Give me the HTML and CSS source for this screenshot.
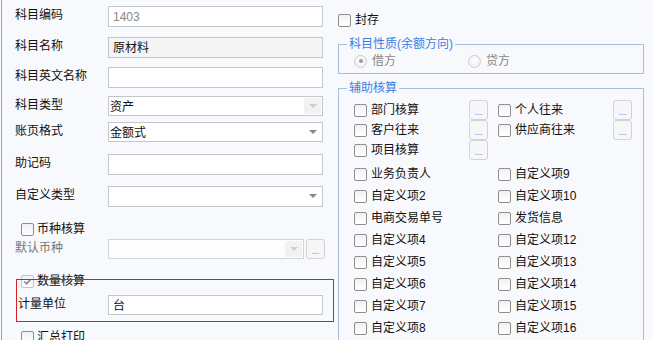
FILE: index.html
```html
<!DOCTYPE html>
<html lang="zh-CN">
<head>
  <meta charset="UTF-8" />
  <meta name="viewport" content="width=device-width, initial-scale=1">
  <title>科目设置</title>
  <link rel="stylesheet" href="styles.css">
</head>
<body>

  <div class="page">
    <div class="left">
      <div class="row r1"><label>科目编码</label><div class="field ro">1403</div></div>
      <div class="row r2"><label>科目名称</label><div class="field grey">原材料</div></div>
      <div class="row r3"><label>科目英文名称</label><div class="field"></div></div>
      <div class="row r4"><label>科目类型</label><div class="field select off">资产<span class="arrow"></span></div></div>
      <div class="row r5"><label>账页格式</label><div class="field select">金额式<span class="arrow"></span></div></div>
      <div class="row r6"><label>助记码</label><div class="field"></div></div>
      <div class="row r7"><label>自定义类型</label><div class="field select"><span class="arrow"></span></div></div>

      <div class="check currency"><span class="cb"></span>币种核算</div>
      <div class="row sub dim">
        <label>默认币种</label>
        <div class="field select off short"><span class="arrow"></span></div>
        <span class="dots">...</span>
      </div>

      <div class="check qty"><span class="cb on"><svg viewBox="0 0 12 12"><polyline points="2.5,6 5,8.5 9.5,3.5" /></svg></span>数量核算</div>
      <div class="row unit"><label>计量单位</label><div class="field">台</div></div>
      <div class="check print"><span class="cb"></span>汇总打印</div>

      <div class="mark"></div>
    </div>

    <div class="right">
      <div class="check seal"><span class="cb"></span>封存</div>

      <fieldset class="group nature">
        <legend>科目性质(余额方向)</legend>
        <div class="radios">
          <span class="radio-item"><span class="rb on"></span>借方</span>
          <span class="radio-item"><span class="rb"></span>贷方</span>
        </div>
      </fieldset>

      <fieldset class="group aux">
        <legend>辅助核算</legend>
        <div class="aux-grid top">
          <div class="cell"><span class="check"><span class="cb"></span>部门核算</span><span class="dots">...</span></div>
          <div class="cell"><span class="check"><span class="cb"></span>个人往来</span><span class="dots">...</span></div>
          <div class="cell"><span class="check"><span class="cb"></span>客户往来</span><span class="dots">...</span></div>
          <div class="cell"><span class="check"><span class="cb"></span>供应商往来</span><span class="dots">...</span></div>
          <div class="cell"><span class="check"><span class="cb"></span>项目核算</span><span class="dots">...</span></div>
          <div class="cell"></div>
        </div>
        <div class="aux-grid items">
          <span class="check"><span class="cb"></span>业务负责人</span>
          <span class="check"><span class="cb"></span>自定义项9</span>
          <span class="check"><span class="cb"></span>自定义项2</span>
          <span class="check"><span class="cb"></span>自定义项10</span>
          <span class="check"><span class="cb"></span>电商交易单号</span>
          <span class="check"><span class="cb"></span>发货信息</span>
          <span class="check"><span class="cb"></span>自定义项4</span>
          <span class="check"><span class="cb"></span>自定义项12</span>
          <span class="check"><span class="cb"></span>自定义项5</span>
          <span class="check"><span class="cb"></span>自定义项13</span>
          <span class="check"><span class="cb"></span>自定义项6</span>
          <span class="check"><span class="cb"></span>自定义项14</span>
          <span class="check"><span class="cb"></span>自定义项7</span>
          <span class="check"><span class="cb"></span>自定义项15</span>
          <span class="check"><span class="cb"></span>自定义项8</span>
          <span class="check"><span class="cb"></span>自定义项16</span>
        </div>
      </fieldset>
    </div>
  </div>

</body>
</html>
```

FILE: styles.css
```css
html, body {
  margin: 0;
  height: 100%;
  overflow: hidden;
}

body {
  background: #f8f9fd;
  font-family: "Liberation Sans", "Noto Sans CJK SC", sans-serif;
  font-size: 12px;
  line-height: 16px;
  color: #111;
}

.page {
  display: flex;
  height: 100%;
  margin-left: 1px;
  border-left: 1px solid #7fa5da;
}

/* left column */
.left {
  position: relative;
  width: 323px;
  padding: 6px 0 0 13px;
  display: flex;
  flex-direction: column;
}

.left > * { flex-shrink: 0; }

.row {
  display: flex;
  align-items: center;
  height: 21px;
  margin-bottom: 9px;
}

.r1 { margin-bottom: 10px; }
.r3 { margin-bottom: 8px; }
.r4 { height: 20px; margin-bottom: 6px; }
.r5 { height: 20px; margin-bottom: 12px; }
.r6 { margin-bottom: 11px; }
.r4 .field, .r5 .field { height: 20px; }

.row label {
  width: 93px;
  padding-bottom: 3px;
}

.field {
  position: relative;
  box-sizing: border-box;
  width: 215px;
  height: 21px;
  border: 1px solid #c3c7cc;
  background: #fff;
  padding: 1px 4px 0 4px;
  line-height: 18px;
}

.field.ro { color: #888; }
.field.grey { background: #f5f5f6; }

.select { padding-left: 1px; }

.arrow {
  position: absolute;
  right: 1px;
  top: 1px;
  width: 17px;
  height: 16px;
}

.arrow::after {
  content: "";
  position: absolute;
  left: 5px;
  top: 6px;
  border-left: 4px solid transparent;
  border-right: 4px solid transparent;
  border-top: 4px solid #888;
}

.off .arrow { background: #f2f2f2; }
.off .arrow::after { border-top-color: #cfcfcf; }

.check {
  display: flex;
  align-items: center;
  gap: 4px;
  height: 18px;
}

.cb {
  box-sizing: border-box;
  width: 13px;
  height: 13px;
  border: 1px solid #8e8e8e;
  border-radius: 2px;
  background: linear-gradient(#f1f1f1, #fff);
  flex: none;
}

.cb svg {
  display: block;
  width: 11px;
  height: 11px;
}

.cb svg polyline {
  fill: none;
  stroke: #8a8a8a;
  stroke-width: 1.8;
}

.cb.on { border-color: #bdbdbd; }

.currency { margin: 4px 0 0 6px; gap: 3px; }

.sub { height: 20px; margin: 1px 0 0; }
.dim label { color: #777; }
.short { width: 196px; height: 20px; background: #fdfdfd; border-color: #d2d5d8; }

.dots {
  box-sizing: border-box;
  width: 19px;
  height: 20px;
  margin-left: 2px;
  border: 1px solid #d3d3d3;
  border-radius: 3px;
  background: #f7f7f7;
  color: #4f7fd0;
  font-family: "DejaVu Sans", sans-serif;
  font-size: 8px;
  line-height: 23px;
  text-align: center;
  letter-spacing: 0;
}

.qty { margin: 13px 0 0 6px; gap: 3px; }
.qty .cb { border-color: #c5c5c5; }

.unit { margin: 5px 0 0; height: 20px; }
.unit label { padding-left: 3px; width: 91px; }
.unit .field { width: 215px; height: 20px; margin-left: -1px; }

.print { margin: 13px 0 0 6px; gap: 3px; }

.mark {
  position: absolute;
  left: 14px;
  top: 279px;
  width: 316px;
  height: 41px;
  border: 1px solid #d42020;
}

/* right column */
.right {
  width: 306px;
  padding: 11px 0 0 0;
}

.seal { margin-bottom: 7px; }

.group {
  margin: 0;
  padding: 0 8px;
  border: 1px solid #aabfd8;
  min-width: 0;
}

.group legend {
  padding: 0 2px;
  color: #3c7fe4;
  line-height: 16px;
}

.nature { padding-bottom: 3px; margin-bottom: 6px; }

.radios {
  display: flex;
  margin-left: 7px;
  height: 18px;
  align-items: center;
  color: #888;
}

.radio-item {
  display: flex;
  align-items: center;
  gap: 5px;
  width: 114px;
}

.rb {
  position: relative;
  box-sizing: border-box;
  width: 13px;
  height: 13px;
  border: 1px solid #cdcdcd;
  border-radius: 50%;
  background: radial-gradient(circle at 50% 40%, #fff, #ececec);
}

.rb.on::after {
  content: "";
  position: absolute;
  left: 3.5px;
  top: 3.5px;
  width: 4px;
  height: 4px;
  border-radius: 50%;
  background: #9a9a9a;
}

.aux { height: 280px; }

.aux-grid {
  display: grid;
  grid-template-columns: 134px 134px;
  column-gap: 10px;
  margin-left: 7px;
}

.aux-grid.top {
  padding-top: 4px;
  grid-auto-rows: 20px;
}

.cell {
  display: flex;
  align-items: center;
  justify-content: space-between;
}

.cell .dots { margin: 0; }

.aux-grid.items {
  margin-top: 3px;
  grid-auto-rows: 22px;
}

.aux-grid.items .check { height: 22px; }
```
